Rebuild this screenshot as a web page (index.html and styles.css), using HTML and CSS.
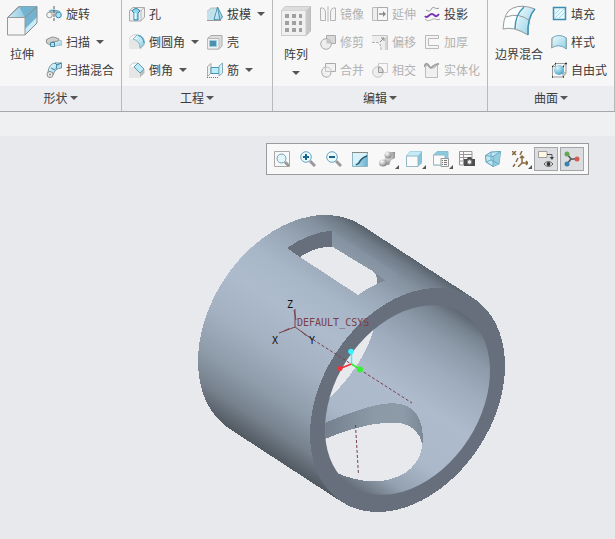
FILE: index.html
```html
<!DOCTYPE html>
<html lang="zh-CN">
<head>
<meta charset="utf-8">
<meta name="viewport" content="width=device-width, initial-scale=1">
<title>模型</title>
<link rel="stylesheet" href="styles.css">
</head>
<body>
<svg class="defs" width="0" height="0" aria-hidden="true">
  <defs>
    <linearGradient id="blue" x1="0" y1="0" x2="1" y2="1"><stop offset="0" stop-color="#f2fbfe"/><stop offset="1" stop-color="#8ccfe4"/></linearGradient>
    <linearGradient id="deep" x1="0" y1="0" x2="1" y2="0"><stop offset="0" stop-color="#c9ecf8"/><stop offset="1" stop-color="#6fb2cf"/></linearGradient>
    <linearGradient id="grey" x1="0" y1="0" x2="1" y2="1"><stop offset="0" stop-color="#f4f4f4"/><stop offset="1" stop-color="#c4c4c4"/></linearGradient>
    <radialGradient id="ball" cx=".35" cy=".3" r=".8"><stop offset="0" stop-color="#fff"/><stop offset="1" stop-color="#777"/></radialGradient>
    <radialGradient id="aqua" cx=".35" cy=".3" r=".8"><stop offset="0" stop-color="#d9f4fc"/><stop offset="1" stop-color="#3c9cc4"/></radialGradient>
  </defs>
</svg>

<header class="ribbon">
  <section class="group">
    <div class="tools">
      <button class="big" type="button">
        <svg width="32" height="32" viewBox="0 0 32 32"><path d="M1.500 12.500 13 1.500H31L19 12.500z" fill="url(#deep)" stroke="#999"/><path d="M13 1.500H31V18L19 29.500V12.500z" fill="#73b3d0"/><path d="M19 29.500V24L31 12V18z" fill="#c8edf9"/><path d="M13 1.500 1.500 12.500H19L31 1.500V18L19 30" fill="none" stroke="#8b8b8b"/><path d="M1.500 12.500H19V30H1.500z" fill="#f6f6f6" stroke="#999"/></svg>
        <span>拉伸</span>
      </button>
      <div class="column">
        <button class="small" type="button"><svg width="16" height="16" viewBox="0 0 16 16"><path d="M4 5 12 7" stroke="#bbb" stroke-width="3"/><circle cx="3.500" cy="9" r="2.800" fill="#f4f4f4" stroke="#999"/><circle cx="12.500" cy="9" r="2.800" fill="#aee0f1" stroke="#2d89b0"/><path d="M3 5.500Q8 3 14 6" fill="none" stroke="#63b0cf" stroke-width="1.500"/><path d="M8 0V16" stroke="#555" stroke-dasharray="3 1"/></svg><span>旋转</span></button>
        <button class="small drop" type="button"><svg width="16" height="16" viewBox="0 0 16 16"><path d="M5 8 12 6 16 7V11Q12 11 7 13z" fill="url(#blue)" stroke="#9cc3d2"/><path d="M.5 5.500 6 3Q9 3 13 5L12 7 6 8V12L.5 9z" fill="#cfcfcf" stroke="#929292"/><path d="M4.500 8.500H8.500V12.500H4.500z" fill="#b4dceb" stroke="#4286a0"/></svg><span>扫描</span></button>
        <button class="small" type="button"><svg width="16" height="16" viewBox="0 0 16 16"><path d="M2 10Q3 2 9 1H15.500V6Q9 6 7 13z" fill="url(#blue)" stroke="#7197a5"/><path d="M9 1 11 3 15.500 1M11 3 10 7M5 6 9 8" fill="none" stroke="#307e9f"/><circle cx="4" cy="12.500" r="3" fill="#eee" stroke="#888"/><circle cx="4" cy="12.500" r="1" fill="#888"/></svg><span>扫描混合</span></button>
      </div>
    </div>
    <button class="caption drop" type="button">形状</button>
  </section>

  <section class="group">
    <div class="tools">
      <div class="column features">
        <button class="small" type="button"><svg width="16" height="16" viewBox="0 0 16 16"><path d="M.5 4.500 4 1.500H15.500V11L12 15H.5z" fill="#eee" stroke="#aaa"/><path d="M.5 4.500H12V15M12 4.500 15.500 1.500" fill="none" stroke="#bbb"/><path d="M3 5Q7 0 11 5L9 7V14H5V7z" fill="#91d6ec" stroke="#2d86a9"/><path d="M6.500 7V13" stroke="#e6fbff" stroke-width="2"/></svg><span>孔</span></button>
        <button class="small drop" type="button"><svg width="16" height="16" viewBox="0 0 16 16"><path d="M0 5H4Q11 6 11 15H0z" fill="#e6e6e6"/><path d="M0 4.500 4 1 8 .5" fill="none" stroke="#ccc"/><path d="M11 14 15.500 9V11L11 15.500z" fill="#bbb"/><path d="M4 5 8 1Q15 1 15.500 9L11 14Q11 7 4 5z" fill="url(#blue)" stroke="#7fb9ce"/><path d="M9 1.500Q14.500 3 15 9" fill="none" stroke="#3c91b3"/></svg><span>倒圆角</span></button>
        <button class="small drop" type="button"><svg width="16" height="16" viewBox="0 0 16 16"><path d="M0 5H5L11 11V16H0z" fill="#e6e6e6"/><path d="M11 11 15.500 7V11L11 15.500z" fill="#bbb"/><path d="M0 4.500 4 1H9" fill="none" stroke="#ccc"/><path d="M5 5 9 1 15 7 11 11z" fill="#bdeaf7" stroke="#609eb5"/></svg><span>倒角</span></button>
      </div>
      <div class="column">
        <button class="small drop" type="button"><svg width="16" height="16" viewBox="0 0 16 16"><path d="M0 5.500 4 2H10L8 6V14H0z" fill="#c1e2ed"/><path d="M0 5.500 4 2H10" fill="none" stroke="#bbb"/><path d="M7 13.500 10.500 1 15.500 11 13 14z" fill="url(#blue)" stroke="#4793b3"/><path d="M10.500 1 13 14" stroke="#4793b3"/><path d="M0 14.500H14" stroke="#999"/></svg><span>拔模</span></button>
        <button class="small" type="button"><svg width="16" height="16" viewBox="0 0 16 16"><path d="M.5 4.500 4 1.500H15V12L12 15H.5z" fill="#ddd" stroke="#aaa"/><path d="M.5 4.500H12V15H.5z" fill="#f1f1f1" stroke="#bbb"/><path d="M2.500 6.500H9.500V12.500H2.500z" fill="#4f91ad" stroke="#9acee0"/></svg><span>壳</span></button>
        <button class="small drop" type="button"><svg width="16" height="16" viewBox="0 0 16 16"><path d="M.5 4.500 4 1.500V11L.5 14.500z" fill="#eee" stroke="#aaa"/><path d="M4 5.500H12V11.500H4z" fill="#bcecfa" stroke="#4198b8"/><path d="M12 4 15.500 1V11L12 14z" fill="#d5eff7" stroke="#86aebc"/><path d="M0 15.500H12" stroke="#777" stroke-dasharray="1 1"/></svg><span>筋</span></button>
      </div>
    </div>
    <button class="caption drop" type="button">工程</button>
  </section>

  <section class="group">
    <div class="tools">
      <button class="big drop" type="button">
        <svg width="32" height="32" viewBox="0 0 32 32"><path d="M1.500 5.500 5 1.500H30.500V26L26 30.500H1.500z" fill="#c6c6c6" stroke="#bbb"/><path d="M1.500 5.500H26V30.500H1.500z" fill="#f0f0f0" stroke="#ccc"/><path d="M1.500 5.500 5 1.500H30.500L26 5.500z" fill="#ddd"/><path d="M5 11H22M5 18H22M5 25H22" stroke="#a0a0a0" stroke-width="4" stroke-dasharray="4 3"/></svg>
        <span>阵列</span>
      </button>
      <div class="edits">
        <button class="small" type="button" disabled><svg width="16" height="16" viewBox="0 0 16 16"><path d="M.5 14.500V2Q5 1 5.500 7V14.500zM15.500 14.500V2Q11 1 10.500 7V14.500z" fill="#f4f4f4" stroke="#b4b4b4"/><path d="M8 0V16" stroke="#bbb"/></svg><span>镜像</span></button>
        <button class="small" type="button" disabled><svg width="16" height="16" viewBox="0 0 16 16"><path d="M.5 1.500H15.500V14.500H.5z" fill="#eee" stroke="#bbb"/><path d="M5.500 1.500H15.500V14.500H5.500z" fill="#f6f6f6" stroke="#aaa"/><path d="M7 8H12" stroke="#888" stroke-width="1.500"/><path d="M11 5 14 8 11 11z" fill="#888"/></svg><span>延伸</span></button>
        <button class="small" type="button"><svg width="16" height="16" viewBox="0 0 16 16"><path d="M2 4C5 6 7 5 8 2C10 0 12 4 15 2" fill="none" stroke="#999"/><path d="M1 10C3 13 5 8 8 8C11 8 11 13 15 8" fill="none" stroke="#7936b6" stroke-width="2"/><path d="M1 13C4 16 7 14 9 13C11 12 13 15 16 13" fill="none" stroke="#aaa"/></svg><span>投影</span></button>
        <button class="small" type="button" disabled><svg width="16" height="16" viewBox="0 0 16 16"><path d="M6.500 1.500H15.500V9.500H6.500z" fill="#d9d9d9" stroke="#aaa"/><circle cx="6" cy="10" r="5.300" fill="#eee" stroke="#aaa"/><path d="M6.500 5V9.500H11Q11 5 6.500 5z" fill="#c4c4c4"/></svg><span>修剪</span></button>
        <button class="small" type="button" disabled><svg width="16" height="16" viewBox="0 0 16 16"><path d="M0 1H16V16H9Q9 8 5 8H0z" fill="#ededed"/><path d="M0 1.500H15.500V16" fill="none" stroke="#c4c4c4"/><path d="M14 3V16" stroke="#d4d4d4" stroke-width="2"/><path d="M0 8.500H5Q9 8.500 9 16" fill="none" stroke="#b0b0b0" stroke-dasharray="3 1"/><path d="M8 8 12 4M9 4H12V7" fill="none" stroke="#888"/></svg><span>偏移</span></button>
        <button class="small" type="button" disabled><svg width="16" height="16" viewBox="0 0 16 16"><path d="M1.500 1.500H14.500V4.500H4.500V11.500H14.500V14.500H1.500z" fill="#f4f4f4" stroke="#b9b9b9"/></svg><span>加厚</span></button>
        <button class="small" type="button" disabled><svg width="16" height="16" viewBox="0 0 16 16"><path d="M5.500 1.500H15.500V9.500H11Q11 15 6 15.300A5.300 5.300 0 0 1 5.500 5z" fill="#f1f1f1" stroke="#aaa"/><path d="M5.500 5Q11 5 11 9.500M5.500 5V9.500H11" fill="none" stroke="#c4c4c4"/></svg><span>合并</span></button>
        <button class="small" type="button" disabled><svg width="16" height="16" viewBox="0 0 16 16"><path d="M6.500 1.500H15.500V10.500H6.500z" fill="none" stroke="#ccc"/><circle cx="6" cy="10" r="5.300" fill="#eee" stroke="#c4c4c4"/><path d="M6.500 5Q11 5 11 10.500H6.500z" fill="#ddd" stroke="#999"/></svg><span>相交</span></button>
        <button class="small" type="button" disabled><svg width="16" height="16" viewBox="0 0 16 16"><path d="M1.500 5V15.500H13.500V3L10 6H6L3 3z" fill="#f0f0f0" stroke="#bbb"/><path d="M0 5C2 0 4 2 5 4C8 9 9 1 15 2" fill="none" stroke="#a2a2a2" stroke-width="2"/></svg><span>实体化</span></button>
      </div>
    </div>
    <button class="caption drop" type="button">编辑</button>
  </section>

  <section class="group">
    <div class="tools">
      <button class="big" type="button">
        <svg width="34" height="32" viewBox="0 0 34 32"><path d="M1 24Q2 6 11 3Q20-1 33 4Q26 12 26 30Q12 21 1 24z" fill="#fafdfe"/><path d="M17 12Q18 6 22 2Q28 2 33 4Q26 12 26 30L14 25Q14 18 17 12z" fill="url(#blue)"/><path d="M1 24Q2 6 11 3Q20-1 33 4Q26 12 26 30Q12 21 1 24M4 12Q17 7 28 16" fill="none" stroke="#999"/><path d="M22 2Q13 10 13 24M33 4Q25 12 26 30" fill="none" stroke="#4395b6" stroke-width="1.500"/></svg>
        <span>边界混合</span>
      </button>
      <div class="column">
        <button class="small" type="button"><svg width="16" height="16" viewBox="0 0 16 16"><path d="M2.500 1.500H14.500V13.500H2.500z" fill="#e4f7fd" stroke="#3d8dae" stroke-width="1.500"/><path d="M4 8 9 3M4 12 13 3M8 12 13 7" stroke="#a6dbeb"/></svg><span>填充</span></button>
        <button class="small" type="button"><svg width="16" height="16" viewBox="0 0 16 16"><path d="M1 4Q8-1 15.500 4V15Q8 9 .5 14z" fill="url(#blue)" stroke="#6fa5ba"/><path d="M1 4V14M15 4V14" stroke="#aaa"/></svg><span>样式</span></button>
        <button class="small" type="button"><svg width="16" height="16" viewBox="0 0 16 16"><path d="M1.500 4.500 4.500 1.500H15L12 4.500V15H1.500zH12M15 1.500V11L12 15M4.500 1.500V11H15" fill="none" stroke="#999"/><circle cx="8" cy="8" r="5" fill="url(#aqua)"/><path d="M1 4.500H2M12 4.500H13M1 15H2M12 15H13M4 1.500H5M14 1.500H16" stroke="#333" stroke-width="1.500"/></svg><span>自由式</span></button>
      </div>
    </div>
    <button class="caption drop" type="button">曲面</button>
  </section>
</header>

<div class="strip"></div>

<main class="viewport">
  <div class="viewbar" role="toolbar" aria-label="视图">
    <button type="button" aria-label="重新调整"><svg width="16" height="16" viewBox="0 0 16 16"><path d="M.5.500H15.500V15.500H.5z" fill="#fafafa" stroke="#aaa"/><path d="M11 11 15 15" stroke="#999" stroke-width="3"/><circle cx="7.500" cy="7.500" r="4.500" fill="#e5f6fb" stroke="#69a0b7"/></svg></button>
    <button type="button" aria-label="放大"><svg width="16" height="16" viewBox="0 0 16 16"><path d="M10 10 15 15" stroke="#999" stroke-width="3"/><circle cx="6" cy="6" r="5.300" fill="#eaf7fb" stroke="#69a6bd"/><path d="M3 6H9M6 3V9" stroke="#17678c" stroke-width="2"/></svg></button>
    <button type="button" aria-label="缩小"><svg width="16" height="16" viewBox="0 0 16 16"><path d="M10 10 15 15" stroke="#999" stroke-width="3"/><circle cx="6" cy="6" r="5.300" fill="#eaf7fb" stroke="#69a6bd"/><path d="M3 6H9" stroke="#17678c" stroke-width="2"/></svg></button>
    <button type="button" aria-label="重画"><svg width="16" height="16" viewBox="0 0 16 16"><path d="M.5 1.500H15.500V15.500H.5z" fill="url(#deep)" stroke="#8fb5c3"/><path d="M1 2H15L14 5Q8 7 5 12L1 14z" fill="#d9f1f9"/><path d="M15 5Q9 7 7 12L4 14" fill="none" stroke="#285c74" stroke-width="1.500"/><path d="M0 1.500H16" stroke="#888"/></svg></button>
    <button class="more" type="button" aria-label="渲染"><svg width="16" height="16" viewBox="0 0 16 16"><path d="M8 1H16V7L12 9 10 14 4 13 6 7z" fill="url(#ball)"/><circle cx="9" cy="4" r="3.500" fill="url(#ball)"/><ellipse cx="4" cy="12" rx="4" ry="3.500" fill="url(#ball)"/></svg></button>
    <button class="more" type="button" aria-label="显示样式"><svg width="16" height="16" viewBox="0 0 16 16"><path d="M.5 5 4 .5H15.500V12L12 15.500H.5z" fill="#85c5dc" stroke="#8bbed0"/><path d="M.5 5 4 .5H15.500L12 5z" fill="#c5ecf8"/><path d="M.5 5H12V15.500H.5z" fill="#fafafa" stroke="#94b8c5"/></svg></button>
    <button class="more" type="button" aria-label="已保存方向"><svg width="16" height="16" viewBox="0 0 16 16"><path d="M.5 4 4 .5H15V10L12 14H.5z" fill="#8bcade" stroke="#8bbed0"/><path d="M.5 4H12V14H.5z" fill="#fafafa" stroke="#94b8c5"/><path d="M8 7.500H15.500V15.500H8z" fill="#f6f6f6" stroke="#999"/><path d="M9 9.500H10M11 9.500H14M9 11.500H10M11 11.500H14M9 13.500H10M11 13.500H14" stroke="#777"/></svg></button>
    <button type="button" aria-label="视图管理器"><svg width="16" height="16" viewBox="0 0 16 16"><path d="M.5.500H13V14H.5zM4.500 0V14M0 3.500H13M0 6.500H13M0 10H13" fill="#fafafa" stroke="#999"/><path d="M5 8H8L9 6H12L13 8H16V15H5z" fill="#4e4e4e"/><circle cx="10.500" cy="11" r="2.300" fill="#eee" stroke="#777"/></svg></button>
    <button type="button" aria-label="透视图"><svg width="16" height="16" viewBox="0 0 16 16"><path d="M.5 4.500 6 1 15.500.500 14 13 8 15.500 1 11z" fill="#bfe6f2" stroke="#5e9eb7"/><path d="M8 5.500 15.500.500 14 13 8 15.500z" fill="#94cde0"/><path d="M.5 4.500 8 5.500 15.500.500M8 5.500V15.500M6 1V9L14 13M1 11 6 9" fill="none" stroke="#69aac2"/></svg></button>
    <button class="more" type="button" aria-label="基准显示"><svg width="16" height="16" viewBox="0 0 16 16"><path d="M0 0 4 4M4 0 0 4M10 0 8 4M6 7 4 11M3 13 1 16M10 5V12L6 16M10 12H16M8 7 10 5 12 7M14 10 16 12 14 14" fill="none" stroke="#8a6841" stroke-width="1.500"/></svg></button>
    <button class="on" type="button" aria-label="注释显示" aria-pressed="true"><svg width="18" height="18" viewBox="0 0 18 18"><path d="M1.500 1.500H10V7.500H1.500z" fill="#fff9e3" stroke="#a0a0a0"/><path d="M10 4.500H15V8" fill="none" stroke="#555"/><path d="M12.500 7H17L15 10z" fill="#444"/><path d="M7 14Q11.500 9 16 14Q11.500 19 7 14z" fill="#fff" stroke="#555"/><circle cx="11.500" cy="14" r="2" fill="#333"/></svg></button>
    <button class="on" type="button" aria-label="旋转中心" aria-pressed="true"><svg width="18" height="18" viewBox="0 0 18 18"><path d="M4 4 8 9 14 9M8 9 4 14" fill="none" stroke="#555" stroke-width="1.500"/><circle cx="4" cy="4" r="2.500" fill="#63a653"/><circle cx="14" cy="9" r="2.500" fill="#d45b51"/><circle cx="4" cy="14" r="2.500" fill="#3585ae"/></svg></button>
  </div>

  <svg class="model" viewBox="0 136 615 403" role="img" aria-label="圆筒模型">
    <defs>
      <linearGradient id="outer" gradientUnits="userSpaceOnUse" x1="473" y1="298" x2="341" y2="502">
        <stop offset="0" stop-color="#5a646e"/><stop offset=".04" stop-color="#717d89"/><stop offset=".1" stop-color="#8592a0"/><stop offset=".2" stop-color="#98a6b6"/><stop offset=".32" stop-color="#a8b7c8"/><stop offset=".45" stop-color="#adbbcd"/><stop offset=".62" stop-color="#a3b1c1"/><stop offset=".78" stop-color="#8f9caa"/><stop offset=".9" stop-color="#76818d"/><stop offset="1" stop-color="#505860"/>
      </linearGradient>
      <linearGradient id="inner" gradientUnits="userSpaceOnUse" x1="463" y1="314" x2="351" y2="486">
        <stop offset="0" stop-color="#5e6873"/><stop offset=".06" stop-color="#778490"/><stop offset=".16" stop-color="#8d9aa9"/><stop offset=".3" stop-color="#9facbd"/><stop offset=".48" stop-color="#adbbcd"/><stop offset=".72" stop-color="#aab8ca"/><stop offset=".88" stop-color="#94a1b0"/><stop offset="1" stop-color="#65707b"/>
      </linearGradient>
      <linearGradient id="wall" gradientUnits="userSpaceOnUse" x1="325" y1="0" x2="423" y2="0">
        <stop offset="0" stop-color="#74808d"/><stop offset=".5" stop-color="#8c99a7"/><stop offset=".8" stop-color="#8d9aa8"/><stop offset="1" stop-color="#7c8895"/>
      </linearGradient>
      <linearGradient id="slot" gradientUnits="userSpaceOnUse" x1="365" y1="252" x2="356" y2="266">
        <stop offset="0" stop-color="#8491a0"/><stop offset="1" stop-color="#8d9aa8"/>
      </linearGradient>
      <clipPath id="bore"><ellipse cx="407.500" cy="400" rx="102.600" ry="72.500" transform="rotate(-57.200 407.500 400)"/></clipPath>
    </defs>
    <g shape-rendering="crispEdges">
      <path d="M341.500 501.800 229.500 428.800A121.300 85.700-57.200 0 1 361.500 225.200L473.500 298.200z" fill="url(#outer)"/>
      <path d="M332 231 399 275Q390 278 378 284L332 247z" fill="url(#slot)"/>
      <path d="M287 248Q308 233 332 230.500V247Q315 247 300 257z" fill="#666f7b"/>
      <path d="M374 272 386 281 376 285z" fill="#7d8996"/>
      <path d="M300 257Q314 247 332 246.500L374 272Q378 277 377 285L358 295z" fill="#e8e9ed"/>
      <path d="M377 284 384 281Q391 278 399 275L420 289 380 310 358 295Q366 289 377 284z" fill="url(#outer)"/>
      <ellipse cx="407.500" cy="400" rx="121.300" ry="85.700" transform="rotate(-57.200 407.500 400)" fill="#666f7b"/>
      <g clip-path="url(#bore)">
        <path d="M310 290H505V512H310z" fill="url(#inner)"/>
        <path d="M375 325Q368 352 350 375Q341 387 328 399L315 390 350 320z" fill="#e8e9ed"/>
        <path d="M320 425Q343 415 365 408C395 400 408 402 417 415Q424 426 422.500 443L415 450 320 445z" fill="url(#wall)"/>
        <path d="M320 441Q350 428 375 424C402 421 412 423 420 437L422 443C422 460 410 472 397 477C379 485 355 481 337 473L310 460z" fill="#e8e9ed"/>
      </g>
    </g>
    <g fill="none" stroke="#7a4047">
      <path d="M295 327V309M295 327 279 333M295 327 309 337"/>
      <path d="M294 310 296 320M284 331 289 328.500M301 331 306 335.500"/>
      <path d="M309 337 412 403M355.500 425 358.500 475" stroke-dasharray="3 2"/>
    </g>
    <text class="csys" x="297" y="326">DEFAULT_CSYS</text>
    <g class="axis"><text x="287" y="308">Z</text><text x="272" y="344">X</text><text x="309" y="344">Y</text></g>
    <path d="M351.500 364V352" stroke="#35f4ff" stroke-width="1.500"/><path d="M351.500 364 340 368.500" stroke="#f02c34" stroke-width="1.500"/><path d="M351.500 364 360 369" stroke="#31f52d" stroke-width="1.500"/>
    <circle cx="351" cy="351.500" r="2.800" fill="#35f4ff"/><circle cx="340" cy="368.500" r="2.500" fill="#fa3038"/><circle cx="360" cy="369.500" r="3" fill="#31f52d"/>
  </svg>
</main>
</body>
</html>
```
FILE: styles.css
```css
* {
  box-sizing: border-box;
}

body {
  margin: 0;
  min-height: 100vh;
  display: flex;
  flex-direction: column;
  background: #e8e9ed;
  color: #3c3c3c;
  font: 12px/16px "Noto Sans CJK SC", sans-serif;
}

.defs {
  position: absolute;
}

button {
  margin: 0;
  padding: 0;
  border: 0;
  background: none;
  color: inherit;
  font: inherit;
}

button:disabled {
  color: #b2b2b2;
}

svg {
  display: block;
  flex: none;
}

/* Ribbon */
.ribbon {
  display: grid;
  grid-template-columns: 122fr 151fr 215fr 127fr;
  background: #f7f7f7;
  border-bottom: 1px solid #a6a7aa;
}

.group {
  display: flex;
  flex-direction: column;
  min-width: 0;
  border-right: 1px solid #b8b9bc;
}

.tools {
  display: flex;
  gap: 8px;
  height: 86px;
  padding-left: 7px;
  white-space: nowrap;
}

.group:first-child .tools {
  padding-left: 6px;
}

.column {
  display: flex;
  flex-direction: column;
  align-items: flex-start;
}

.features {
  width: 70px;
}

.edits {
  display: grid;
  grid-template-columns: 52px 52px auto;
  grid-auto-rows: 28px;
  align-content: start;
}

.small {
  display: flex;
  align-items: center;
  gap: 4px;
  height: 28px;
  padding-bottom: 1px;
}

.big {
  display: flex;
  flex-direction: column;
  align-items: center;
  gap: 9px;
  padding-top: 5px;
}

.drop::after {
  content: "";
  border: 4px solid transparent;
  border-top-color: #555;
  border-bottom: 0;
}

.small.drop::after {
  margin-left: 2px;
}

.caption {
  display: flex;
  align-items: center;
  justify-content: center;
  gap: 2px;
  height: 25px;
  padding-bottom: 1px;
  background: #ecedf0;
}

.strip {
  height: 24px;
  background: #eff0f2;
}

/* Graphics area */
.viewport {
  position: relative;
  flex: 1;
}

.viewbar {
  position: absolute;
  top: 7px;
  right: 26px;
  display: flex;
  gap: 2px;
  padding: 3px 4px 3px 3px;
  background: #f8f8f8;
  border: 1px solid #9b9b9d;
}

.viewbar button {
  position: relative;
  display: flex;
  align-items: center;
  justify-content: center;
  width: 24px;
  height: 24px;
}

.viewbar .more {
  width: 25px;
}

.viewbar .more::after {
  content: "";
  position: absolute;
  right: 0;
  bottom: 2px;
  border: 2px solid #555;
  border-top-color: transparent;
  border-left-color: transparent;
}

.viewbar .on {
  background: #dcdde0;
  border: 1px solid #a5a6a9;
}

.model {
  width: 100%;
  height: auto;
}

.csys {
  fill: #7a4047;
  font: 10px "DejaVu Sans Mono", monospace;
}

.axis {
  fill: #111;
  font: 10px "DejaVu Sans Mono", monospace;
}
```
